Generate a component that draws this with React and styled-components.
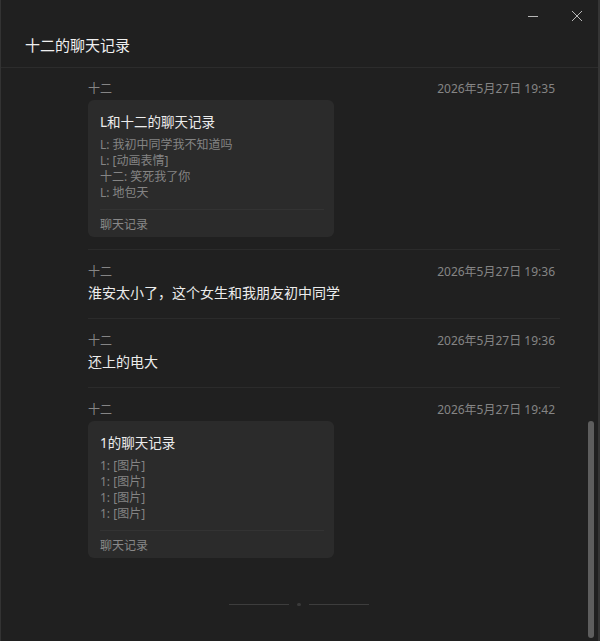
import React from "react";
import styled, { createGlobalStyle } from "styled-components";

const GlobalStyle = createGlobalStyle`
  html, body {
    margin: 0;
    padding: 0;
    background: #202020;
  }
  * {
    box-sizing: border-box;
  }
`;

const messages = [
  {
    id: 1,
    name: "十二",
    time: "2026年5月27日 19:35",
    record: {
      title: "L和十二的聊天记录",
      lines: ["L: 我初中同学我不知道吗", "L: [动画表情]", "十二: 笑死我了你", "L: 地包天"],
    },
  },
  {
    id: 2,
    name: "十二",
    time: "2026年5月27日 19:36",
    text: "淮安太小了，这个女生和我朋友初中同学",
  },
  {
    id: 3,
    name: "十二",
    time: "2026年5月27日 19:36",
    text: "还上的电大",
  },
  {
    id: 4,
    name: "十二",
    time: "2026年5月27日 19:42",
    record: {
      title: "1的聊天记录",
      lines: ["1: [图片]", "1: [图片]", "1: [图片]", "1: [图片]"],
    },
  },
];

const App = () => {
  return (
    <>
      <GlobalStyle />
      <Window>
        <TitleBar>
          <WinButton aria-label='minimize'>
            <svg width='12' height='12' viewBox='0 0 12 12'>
              <path d='M1 6.5h10' stroke='currentColor' strokeWidth='1' />
            </svg>
          </WinButton>
          <WinButton aria-label='close'>
            <svg width='12' height='12' viewBox='0 0 12 12'>
              <path d='M1 1l10 10M11 1L1 11' stroke='currentColor' strokeWidth='1' />
            </svg>
          </WinButton>
        </TitleBar>
        <Header>
          <h1>十二的聊天记录</h1>
        </Header>
        <Body>
          <List>
            {messages.map((msg) => {
              const { id, name, time, text, record } = msg;
              return (
                <Message key={id} $card={!!record}>
                  <Meta>
                    <span>{name}</span>
                    <span>{time}</span>
                  </Meta>
                  {text && <Text>{text}</Text>}
                  {record && (
                    <RecordCard>
                      <h4>{record.title}</h4>
                      <div className='lines'>
                        {record.lines.map((line, i) => (
                          <p key={i}>{line}</p>
                        ))}
                      </div>
                      <footer>聊天记录</footer>
                    </RecordCard>
                  )}
                </Message>
              );
            })}
          </List>
          <EndMark>
            <span className='line' />
            <span className='dot' />
            <span className='line' />
          </EndMark>
          <ScrollThumb />
        </Body>
      </Window>
    </>
  );
};

const Window = styled.div`
  height: 100vh;
  display: flex;
  flex-direction: column;
  background: #202020;
  border-left: 1px solid #333;
  border-right: 2px solid #353535;
  font-family: "Noto Sans", "Noto Sans CJK SC", sans-serif;
  overflow: hidden;
`;

const TitleBar = styled.div`
  height: 32px;
  display: flex;
  justify-content: flex-end;
  align-items: center;
  padding-right: 9px;
  gap: 20px;
`;

const WinButton = styled.button`
  width: 24px;
  height: 24px;
  display: grid;
  place-items: center;
  background: none;
  border: none;
  padding: 0;
  color: #b8b8b8;
`;

const Header = styled.header`
  padding: 3px 24px 12px;
  border-bottom: 1px solid #2c2c2c;
  h1 {
    margin: 0;
    font-size: 15px;
    line-height: 20px;
    font-weight: 400;
    color: #f0f0f0;
  }
`;

const Body = styled.div`
  flex: 1;
  position: relative;
  overflow: hidden;
`;

const List = styled.div`
  padding: 0 38px 0 87px;
`;

const Message = styled.div`
  padding: 13px 5px ${(p) => (p.$card ? "12px" : "15px")} 0;
  border-bottom: 1px solid #2b2b2b;
  &:first-child {
    padding-top: 12px;
  }
  &:last-child {
    border-bottom: none;
  }
`;

const Meta = styled.div`
  display: flex;
  justify-content: space-between;
  font-size: 12px;
  line-height: 18px;
  color: #858585;
  margin-bottom: 2px;
`;

const Text = styled.p`
  margin: 0;
  font-size: 14px;
  line-height: 20px;
  color: #ececec;
`;

const RecordCard = styled.article`
  width: 246px;
  background: #2b2b2b;
  border-radius: 6px;
  padding: 12px 12px 4px;
  h4 {
    margin: 0 0 5px;
    font-size: 13.5px;
    line-height: 20px;
    font-weight: 400;
    color: #ededed;
  }
  .lines {
    padding-bottom: 8px;
    border-bottom: 1px solid #333;
    margin-right: -2px;
  }
  p {
    margin: 0;
    font-size: 12px;
    line-height: 16px;
    color: #848484;
  }
  footer {
    padding-top: 7px;
    font-size: 12px;
    line-height: 16px;
    color: #888;
  }
`;

const EndMark = styled.div`
  display: flex;
  justify-content: center;
  align-items: center;
  gap: 8px;
  margin-top: 33px;
  padding-right: 2px;
  .line {
    width: 60px;
    height: 1px;
    background: #3d3d3d;
  }
  .dot {
    width: 4px;
    height: 3px;
    border-radius: 2px;
    background: #3a3a3a;
  }
`;

const ScrollThumb = styled.div`
  position: absolute;
  right: 4px;
  bottom: 3px;
  width: 6px;
  height: 217px;
  border-radius: 3px;
  background: #5e5e5e;
`;

export default App;
